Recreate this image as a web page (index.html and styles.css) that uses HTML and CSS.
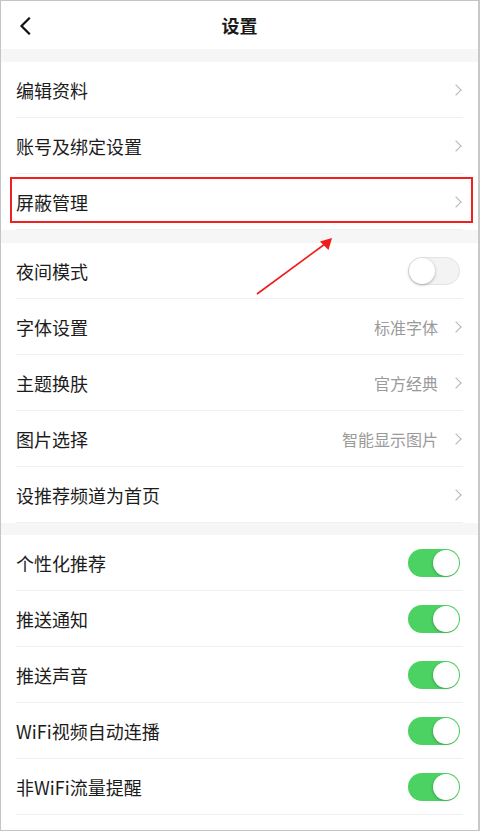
FILE: index.html
```html
<!DOCTYPE html>
<html lang="zh-CN">
<head>
<meta charset="utf-8">
<title>设置</title>
<link rel="stylesheet" href="styles.css">
</head>
<body>
<div class="page">
  <header class="nav">
    <span class="back">
      <svg width="14" height="18" viewBox="0 0 14 18"><path d="M11 1.5 L3.5 9 L11 16.5" fill="none" stroke="#111" stroke-width="2.2" stroke-linecap="square"/></svg>
    </span>
    <h1 class="title">设置</h1>
    <span></span>
  </header>
  <div class="gap"></div>
  <section class="group">
    <div class="row"><span class="label">编辑资料</span><span class="right"><i class="chev"></i></span></div>
    <div class="row"><span class="label">账号及绑定设置</span><span class="right"><i class="chev"></i></span></div>
    <div class="row"><span class="label">屏蔽管理</span><span class="right"><i class="chev"></i></span></div>
  </section>
  <div class="gap"></div>
  <section class="group">
    <div class="row"><span class="label">夜间模式</span><span class="switch off"><b></b></span></div>
    <div class="row"><span class="label">字体设置</span><span class="right"><span class="value">标准字体</span><i class="chev"></i></span></div>
    <div class="row"><span class="label">主题换肤</span><span class="right"><span class="value">官方经典</span><i class="chev"></i></span></div>
    <div class="row"><span class="label">图片选择</span><span class="right"><span class="value">智能显示图片</span><i class="chev"></i></span></div>
    <div class="row"><span class="label">设推荐频道为首页</span><span class="right"><i class="chev"></i></span></div>
  </section>
  <div class="gap short"></div>
  <section class="group">
    <div class="row"><span class="label">个性化推荐</span><span class="switch on"><b></b></span></div>
    <div class="row"><span class="label">推送通知</span><span class="switch on"><b></b></span></div>
    <div class="row"><span class="label">推送声音</span><span class="switch on"><b></b></span></div>
    <div class="row"><span class="label">WiFi视频自动连播</span><span class="switch on"><b></b></span></div>
    <div class="row"><span class="label">非WiFi流量提醒</span><span class="switch on"><b></b></span></div>
  </section>

  <div class="mark-box"></div>
  <svg class="mark-arrow" width="480" height="831" viewBox="0 0 480 831">
    <line x1="257" y1="294" x2="325" y2="244" stroke="#f21a1a" stroke-width="1.6"/>
    <polygon points="332,238 320,241.5 328.5,250" fill="#f21a1a"/>
  </svg>
</div>
</body>
</html>
```

FILE: styles.css
```css
* { box-sizing: border-box; }
html, body { margin: 0; padding: 0; background: #fff; }
body {
  font-family: "Noto Sans CJK SC", "Noto Sans", sans-serif;
  color: #222;
}
.page {
  position: relative;
  width: 480px;
  height: 831px;
  overflow: hidden;
  border: 1px solid #c4c4c4;
  border-right-width: 2px;
  border-right-color: #c8c8c8;
  background: #fff;
}
.nav {
  height: 48px;
  display: grid;
  grid-template-columns: 60px 1fr 60px;
  align-items: center;
}
.back {
  display: flex;
  padding-left: 17px;
  padding-top: 2px;
}
.title {
  margin: 0;
  text-align: center;
  font-size: 18px;
  font-weight: 700;
  line-height: 1;
  color: #1a1a1a;
}
.gap { height: 13px; background: #f6f6f6; }
.gap.short { height: 12px; }
.group { background: #fff; }
.row {
  height: 56px;
  margin: 0 15px 0 15px;
  border-bottom: 1px solid #f0f0f0;
  display: flex;
  align-items: center;
  justify-content: space-between;
}
.label {
  font-size: 18px;
  line-height: 1;
  color: #1c1c1c;
}
.right {
  display: flex;
  align-items: center;
  gap: 14px;
  padding-right: 1px;
}
.value {
  font-size: 16px;
  color: #9a9a9a;
  line-height: 1;
}
.chev {
  display: block;
  width: 8px;
  height: 8px;
  border-top: 1.3px solid #b4b4b4;
  border-right: 1.3px solid #b4b4b4;
  transform: rotate(45deg);
  margin-right: 2px;
}
.switch {
  position: relative;
  width: 52px;
  height: 28px;
  border-radius: 14px;
  margin-right: 3px;
}
.switch b {
  position: absolute;
  top: 1px;
  width: 26px;
  height: 26px;
  border-radius: 50%;
  background: #fff;
}
.switch.on { background: #4cd263; }
.switch.on b {
  right: 1px;
  box-shadow: -1px 1px 2px rgba(0,0,0,0.18);
}
.switch.off {
  background: #f3f3f3;
  border: 1px solid #e4e4e4;
}
.switch.off b {
  left: 0;
  top: 0;
  box-shadow: 0 1px 3px rgba(0,0,0,0.3);
}
.mark-box {
  position: absolute;
  left: 9px;
  top: 176px;
  width: 463px;
  height: 46px;
  border: 2px solid #ef2020;
}
.mark-arrow {
  position: absolute;
  left: -1px;
  top: -1px;
  pointer-events: none;
}
```
